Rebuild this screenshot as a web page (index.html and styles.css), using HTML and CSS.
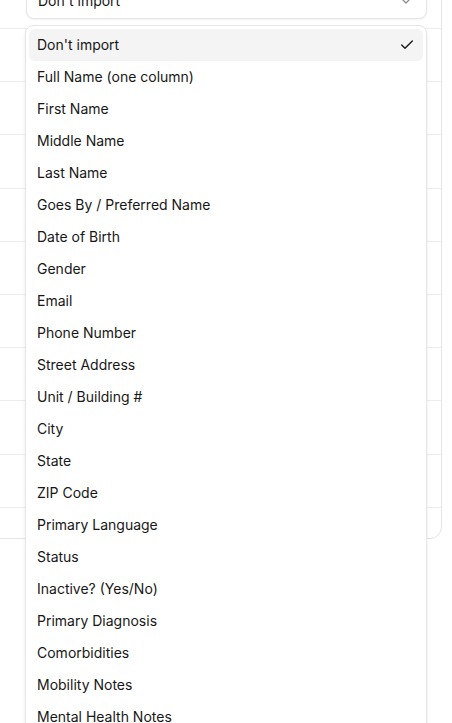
FILE: index.html
```html
<!DOCTYPE html>
<html lang="en">
<head>
<meta charset="utf-8">
<title>Column mapping</title>
<link rel="stylesheet" href="styles.css">
</head>
<body>
<div class="page">
  <div class="card">
    <div class="row row-first">
      <button class="trigger" type="button">
        <span class="trigger-text">Don't import</span>
        <svg class="chev" viewBox="0 0 24 24" width="16" height="16" fill="none" stroke="currentColor" stroke-width="2" stroke-linecap="round" stroke-linejoin="round"><path d="m6 9 6 6 6-6"/></svg>
      </button>
    </div>
    <div class="row"></div>
    <div class="row"></div>
    <div class="row"></div>
    <div class="row"></div>
    <div class="row"></div>
    <div class="row"></div>
    <div class="row"></div>
    <div class="row"></div>
    <div class="row"></div>
    <div class="row row-last"></div>
  </div>
</div>

<div class="menu" role="listbox">
  <div class="item selected"><span>Don't import</span>
    <svg class="check" viewBox="0 0 24 24" width="16" height="16" fill="none" stroke="currentColor" stroke-width="2" stroke-linecap="round" stroke-linejoin="round"><path d="M20 6 9 17l-5-5"/></svg>
  </div>
  <div class="item"><span>Full Name (one column)</span></div>
  <div class="item"><span>First Name</span></div>
  <div class="item"><span>Middle Name</span></div>
  <div class="item"><span>Last Name</span></div>
  <div class="item"><span>Goes By / Preferred Name</span></div>
  <div class="item"><span>Date of Birth</span></div>
  <div class="item"><span>Gender</span></div>
  <div class="item"><span>Email</span></div>
  <div class="item"><span>Phone Number</span></div>
  <div class="item"><span>Street Address</span></div>
  <div class="item"><span>Unit / Building #</span></div>
  <div class="item"><span>City</span></div>
  <div class="item"><span>State</span></div>
  <div class="item"><span>ZIP Code</span></div>
  <div class="item"><span>Primary Language</span></div>
  <div class="item"><span>Status</span></div>
  <div class="item"><span>Inactive? (Yes/No)</span></div>
  <div class="item"><span>Primary Diagnosis</span></div>
  <div class="item"><span>Comorbidities</span></div>
  <div class="item"><span>Mobility Notes</span></div>
  <div class="item"><span>Mental Health Notes</span></div>
</div>
</body>
</html>
```

FILE: styles.css
```css
* { box-sizing: border-box; }

html, body {
  margin: 0;
  padding: 0;
  background: #ffffff;
  height: 723px;
  overflow: hidden;
}

body {
  font-family: Inter, "Noto Sans", sans-serif;
  font-size: 14px;
  line-height: 20px;
  color: #171717;
  position: relative;
}

.page {
  margin-top: -26px;
}

.card {
  margin-left: -16px;
  width: 458px;
  border: 1px solid #e5e5e5;
  border-radius: 12px;
  background: #ffffff;
}

.row {
  height: 53.2px;
  border-bottom: 1px solid #ededed;
}

.row-first {
  height: 54px;
  padding: 8px 0 0 41px;
}

.row-last {
  height: 30px;
  border-bottom: none;
}

.trigger {
  display: flex;
  align-items: center;
  justify-content: space-between;
  width: 401px;
  height: 36px;
  padding: 0 12px 0 11px;
  border: 1px solid #e5e5e5;
  border-radius: 8px;
  background: #ffffff;
  box-shadow: 0 1px 2px rgba(0, 0, 0, 0.05);
  font: inherit;
  color: #171717;
}

.chev {
  color: #737373;
  opacity: 0.8;
  flex: none;
}

.menu {
  position: absolute;
  top: 25px;
  left: 25px;
  width: 402px;
  padding: 3px;
  border: 1px solid #e5e5e5;
  border-radius: 8px;
  background: #ffffff;
  box-shadow: 0 4px 6px -1px rgba(0, 0, 0, 0.08), 0 2px 4px -2px rgba(0, 0, 0, 0.06);
  z-index: 10;
}

.item {
  display: flex;
  align-items: center;
  justify-content: space-between;
  height: 32px;
  padding: 0 8px;
  border-radius: 6px;
  color: #171717;
}

.item.selected {
  background: #f4f4f4;
}

.check {
  flex: none;
  color: #171717;
}
```
